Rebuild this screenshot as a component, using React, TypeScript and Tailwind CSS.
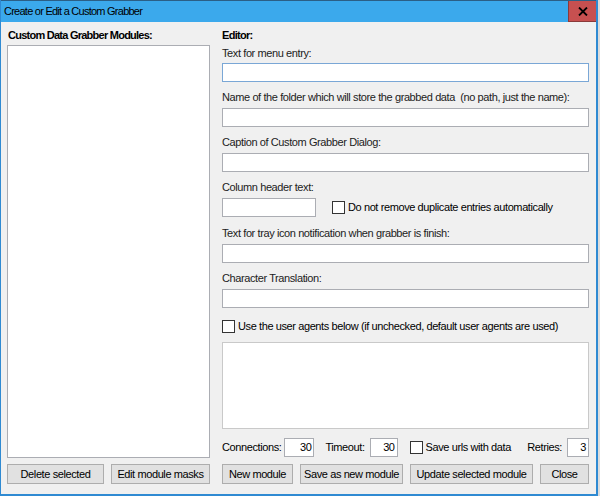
import React from "react";

const font = { fontFamily: '"Liberation Sans", Arial, sans-serif' };

function TextBox({ className = "", focused = false, value }: { className?: string; focused?: boolean; value?: string }) {
	return (
		<div
			className={
				"h-[19px] bg-white border flex items-center justify-end pr-[2px] text-[11px] text-black " +
				(focused ? "border-[#7aa7d6]" : "border-[#abadb3]") +
				" " +
				className
			}>
			{value}
		</div>
	);
}

function Check({ label }: { label: string }) {
	return (
		<div className="flex items-center gap-[3px] whitespace-nowrap">
			<div className="w-[13px] h-[13px] bg-white border border-[#333]" />
			<span>{label}</span>
		</div>
	);
}

function Btn({ label, className = "" }: { label: string; className?: string }) {
	return (
		<div
			className={
				"h-[20px] bg-[#e1e1e1] border border-[#adadad] flex items-center justify-center text-[11px] text-black whitespace-nowrap " +
				className
			}>
			{label}
		</div>
	);
}

function Label({ text, className = "" }: { text: string; className?: string }) {
	return <div className={"h-[13px] leading-[13px] text-[11px] text-[#222] whitespace-pre " + className}>{text}</div>;
}

export default function App() {
	return (
		<div className="w-[600px] h-[496px] flex bg-[#e8e8e8] overflow-hidden" style={font}>
			{/* window */}
			<div className="w-[598px] h-[496px] flex flex-col border-l border-r-2 border-b-2 border-[#2f8ad2] bg-[#f0f0f0]">
				{/* title bar */}
				<div className="h-[22px] flex items-stretch bg-[#3ba9ec] border-t border-[#2b5f86]">
					<div className="flex-1 pl-[3px] flex items-center text-[11px] tracking-[-0.75px] text-black">Create or Edit a Custom Grabber</div>
					<div className="w-[28px] bg-[#c75050] border-l border-b border-[#8a3a3a] flex items-center justify-center">
						<svg width="10" height="9" viewBox="0 0 10 9">
							<path d="M1 0.5 L9 8.5 M9 0.5 L1 8.5" stroke="#000" strokeWidth="1.8" />
						</svg>
					</div>
				</div>

				{/* body */}
				<div className="flex-1 flex pl-[6px] pr-[7px] pt-[7px] gap-[12px] text-[11px] tracking-[-0.4px] text-black">
					{/* left */}
					<div className="w-[203px] flex flex-col">
						<div className="h-[13px] leading-[13px] font-bold text-[11px] tracking-[-0.75px] ml-[1px]">Custom Data Grabber Modules:</div>
						<div className="mt-[3px] h-[413px] bg-white border border-[#abadb3]" />
						<div className="mt-[6px] flex gap-[7px]">
							<Btn label="Delete selected" className="w-[97px]" />
							<Btn label="Edit module masks" className="w-[99px]" />
						</div>
					</div>

					{/* right */}
					<div className="w-[367px] flex flex-col">
						<div className="h-[13px] leading-[13px] font-bold text-[11px] tracking-[-0.7px]">Editor:</div>
						<Label text="Text for menu entry:" className="mt-[5px]" />
						<TextBox focused className="mt-[3px]" />

						<Label text="Name of the folder which will store the grabbed data  (no path, just the name):" className="mt-[9px]" />
						<TextBox className="mt-[4px]" />

						<Label text="Caption of Custom Grabber Dialog:" className="mt-[9px]" />
						<TextBox className="mt-[4px]" />

						<Label text="Column header text:" className="mt-[9px]" />
						<div className="mt-[4px] flex items-center">
							<TextBox className="w-[94px]" />
							<div className="ml-[16px]">
								<Check label="Do not remove duplicate entries automatically" />
							</div>
						</div>

						<Label text="Text for tray icon notification when grabber is finish:" className="mt-[10px]" />
						<TextBox className="mt-[4px]" />

						<Label text="Character Translation:" className="mt-[9px]" />
						<TextBox className="mt-[4px]" />

						<div className="mt-[12px] h-[13px] leading-[13px]">
							<Check label="Use the user agents below (if unchecked, default user agents are used)" />
						</div>

						<div className="mt-[9px] h-[87px] bg-white border border-[#c9c9c9]" />

						<div className="mt-[9px] flex items-center h-[19px] whitespace-nowrap">
							<span>Connections:</span>
							<TextBox value="30" className="ml-[3px] w-[30px]" />
							<span className="ml-[11px]">Timeout:</span>
							<TextBox value="30" className="ml-[5px] w-[28px]" />
							<div className="ml-[12px]">
								<Check label="Save urls with data" />
							</div>
							<span className="ml-auto">Retries:</span>
							<TextBox value="3" className="ml-[5px] w-[22px]" />
						</div>

						<div className="mt-[7px] flex gap-[7px]">
							<Btn label="New module" className="w-[71px]" />
							<Btn label="Save as new module" className="w-[103px]" />
							<Btn label="Update selected module" className="w-[123px]" />
							<Btn label="Close" className="w-[49px]" />
						</div>
					</div>
				</div>
			</div>
			{/* background window sliver */}
			<div className="w-[2px] h-full bg-[#dcdcdc]" />
		</div>
	);
}
